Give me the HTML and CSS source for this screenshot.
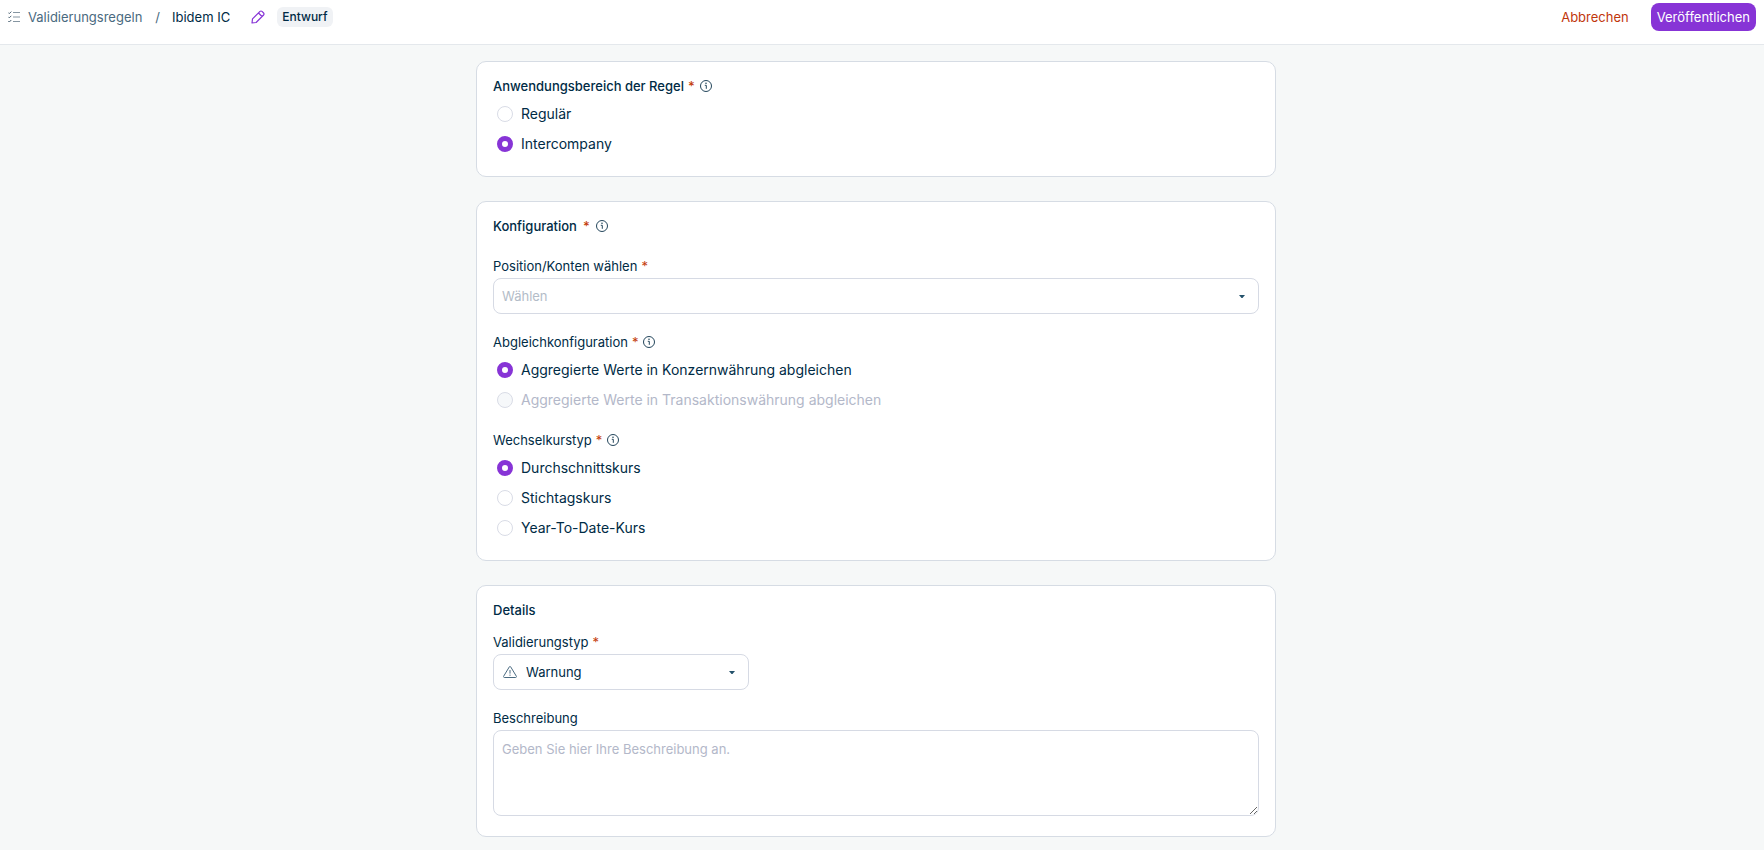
FILE: index.html
```html
<!DOCTYPE html>
<html lang="de">
<head>
<meta charset="utf-8">
<title>Validierungsregeln – Ibidem IC</title>
<link rel="stylesheet" href="styles.css">
</head>
<body>
<svg class="defs" aria-hidden="true">
  <symbol id="info" viewBox="0 0 12 12">
    <circle cx="6" cy="6" r="5.5" fill="none" stroke="currentColor"/>
    <path d="M4.800 5.300H6.300V8.800" fill="none" stroke="currentColor"/>
    <circle cx="6" cy="3.300" r=".8" fill="currentColor"/>
  </symbol>
</svg>
<header class="topbar">
  <nav class="crumbs" aria-label="Brotkrumen">
    <svg class="icon-list" viewBox="0 0 12 12" aria-hidden="true"><path d="M.3 1.600l1 1L3.300.6M.3 5.800l1 1 2-2M.3 10l1 1 2-2"/><path class="lines" d="M5 1.500h7M5 6h7M5 10.500h7"/></svg>
    <a class="crumb-link" href="#">Validierungsregeln</a>
    <span class="slash">/</span>
    <span class="crumb-current">Ibidem IC</span>
    <button class="edit" type="button" aria-label="Name bearbeiten">
      <svg class="icon-edit" viewBox="0 0 14 14" aria-hidden="true"><path d="M1 13l.5-4.100L9 1.400a1.400 1.400 0 0 1 2 0l1.600 1.600a1.400 1.400 0 0 1 0 2L5.100 12.500zM7.500 3l3.500 3.500"/></svg>
    </button>
    <span class="badge">Entwurf</span>
  </nav>
  <div class="actions">
    <button class="cancel" type="button">Abbrechen</button>
    <button class="publish" type="button">Veröffentlichen</button>
  </div>
</header>
<main class="content">
  <section class="card">
    <fieldset class="group">
      <legend class="label strong">Anwendungsbereich der Regel <span class="req">*</span><svg class="info"><use href="#info"/></svg></legend>
      <label class="option"><input type="radio" name="scope">Regulär</label>
      <label class="option"><input type="radio" name="scope" checked>Intercompany</label>
    </fieldset>
  </section>
  <section class="card">
    <h2 class="label strong config-title">Konfiguration <span class="req">*</span><svg class="info"><use href="#info"/></svg></h2>
    <div class="field">
      <label class="label" for="account">Position/Konten wählen <span class="req">*</span></label>
      <div class="select-wrap">
        <select id="account" class="control placeholder"><option>Wählen</option></select>
        <svg class="caret" viewBox="0 0 6 3" aria-hidden="true"><path d="M0 0h6L3.500 3h-1z"/></svg>
      </div>
    </div>
    <fieldset class="group spaced">
      <legend class="label">Abgleichkonfiguration <span class="req">*</span><svg class="info"><use href="#info"/></svg></legend>
      <label class="option"><input type="radio" name="match" checked>Aggregierte Werte in Konzernwährung abgleichen</label>
      <label class="option disabled"><input type="radio" name="match" disabled>Aggregierte Werte in Transaktionswährung abgleichen</label>
    </fieldset>
    <fieldset class="group">
      <legend class="label">Wechselkurstyp <span class="req">*</span><svg class="info"><use href="#info"/></svg></legend>
      <label class="option"><input type="radio" name="rate" checked>Durchschnittskurs</label>
      <label class="option"><input type="radio" name="rate">Stichtagskurs</label>
      <label class="option"><input type="radio" name="rate">Year-To-Date-Kurs</label>
    </fieldset>
  </section>
  <section class="card">
    <h2 class="label strong details-title">Details</h2>
    <div class="field">
      <label class="label" for="type">Validierungstyp <span class="req">*</span></label>
      <div class="select-wrap narrow">
        <svg class="icon-warn" viewBox="0 0 14 12" aria-hidden="true"><path d="M6.300.9a.8.8 0 0 1 1.400 0l5.700 9.400a.8.8 0 0 1-.7 1.200H1.300a.8.8 0 0 1-.7-1.200zM7 4v3.600M7 8.600v1.200"/></svg>
        <select id="type" class="control with-icon"><option>Warnung</option></select>
        <svg class="caret" viewBox="0 0 6 3" aria-hidden="true"><path d="M0 0h6L3.500 3h-1z"/></svg>
      </div>
    </div>
    <div class="last-field">
      <label class="label" for="desc">Beschreibung</label>
      <textarea id="desc" class="description" placeholder="Geben Sie hier Ihre Beschreibung an."></textarea>
    </div>
  </section>
</main>
</body>
</html>
```
FILE: styles.css
```css
* { box-sizing: border-box; }
body {
  margin: 0;
  min-height: 100vh;
  background: #f6f8f8;
  color: #002b45;
  font: 13px/16px Inter, "Liberation Sans", sans-serif;
}
button, select, textarea { font: inherit; color: inherit; }
button { border: 0; background: none; padding: 0; cursor: pointer; }
.defs { display: none; }

.topbar {
  display: flex;
  justify-content: space-between;
  align-items: flex-start;
  height: 45px;
  padding: 3px 8px 0;
  background: #fff;
  border-bottom: 1px solid #e4e8ec;
}
.crumbs { display: flex; align-items: center; height: 28px; }
.icon-list { width: 12px; height: 12px; margin-right: 8px; fill: none; stroke: #4a6172; }
.icon-list .lines { stroke: #8696a2; stroke-width: 1.2; }
.crumb-link { color: #4a6a80; text-decoration: none; }
.slash { margin: 0 12px 0 13px; color: #4a6a80; }
.edit { display: flex; margin: 0 12px 0 21px; }
.icon-edit { width: 14px; height: 14px; fill: none; stroke: #8734d6; stroke-width: 1.2; stroke-linejoin: round; }
.badge { padding: 2px 5px; border-radius: 6px; background: #f0f2f5; font-size: 12px; font-weight: 500; }
.actions { display: flex; align-items: center; gap: 22px; }
.cancel { color: #bf360c; }
.publish { height: 28px; padding: 0 6px; border-radius: 8px; background: #8734d6; color: #fff; }

.content {
  display: flex;
  flex-direction: column;
  align-items: center;
  gap: 24px;
  padding: 16px 12px 12px 0;
}
.card {
  width: 100%;
  max-width: 800px;
  padding: 16px;
  border: 1px solid #d6dce4;
  border-radius: 10px;
  background: #fff;
}
.label { display: flex; align-items: center; gap: 4px; margin: 0; padding: 0; font-size: 13px; font-weight: 400; line-height: 16px; }
.strong { font-weight: 500; }
.req { color: #c43d0c; }
.info { width: 12px; height: 12px; margin-left: 1px; color: #24465c; }
.config-title { gap: 6px; margin-bottom: 24px; }
.config-title .info { margin-left: 0; }
.details-title { margin-bottom: 16px; }
.field { margin-bottom: 20px; }
.field .label, .last-field .label { margin-bottom: 4px; }
.last-field { padding-bottom: 4px; }

.group { margin: 0; padding: 0; border: 0; min-width: 0; }
.group .label { margin-bottom: 6px; }
.spaced { margin-bottom: 16px; }
.option { display: flex; align-items: center; gap: 8px; height: 28px; margin-bottom: 2px; padding-left: 4px; font-size: 14px; }
.option input {
  appearance: none;
  width: 16px;
  height: 16px;
  margin: 0;
  border: 1px solid #d9dce6;
  border-radius: 50%;
  background: #fff;
}
.option input:checked { border: 5px solid #8734d6; }
.option input:disabled { background: #f6f8fa; }
.disabled { color: #b3b8c9; }

.select-wrap { display: grid; align-items: center; }
.select-wrap > * { grid-area: 1 / 1; }
.narrow { width: 256px; }
.control, .description {
  width: 100%;
  border: 1px solid #d6dae4;
  border-radius: 8px;
  background: #fff;
}
.control { appearance: none; height: 36px; padding: 0 32px 0 8px; }
.with-icon { padding-left: 32px; }
.placeholder { color: #b3bcc8; }
.caret { justify-self: end; width: 6px; height: 3px; margin-right: 14px; fill: #24526b; pointer-events: none; }
.icon-warn { z-index: 1; width: 14px; height: 12px; margin-left: 10px; fill: none; stroke: #4a6a80; pointer-events: none; }
.description { display: block; height: 86px; padding: 10px 8px; resize: vertical; }
.description::placeholder { color: #b3b8c9; }
```
